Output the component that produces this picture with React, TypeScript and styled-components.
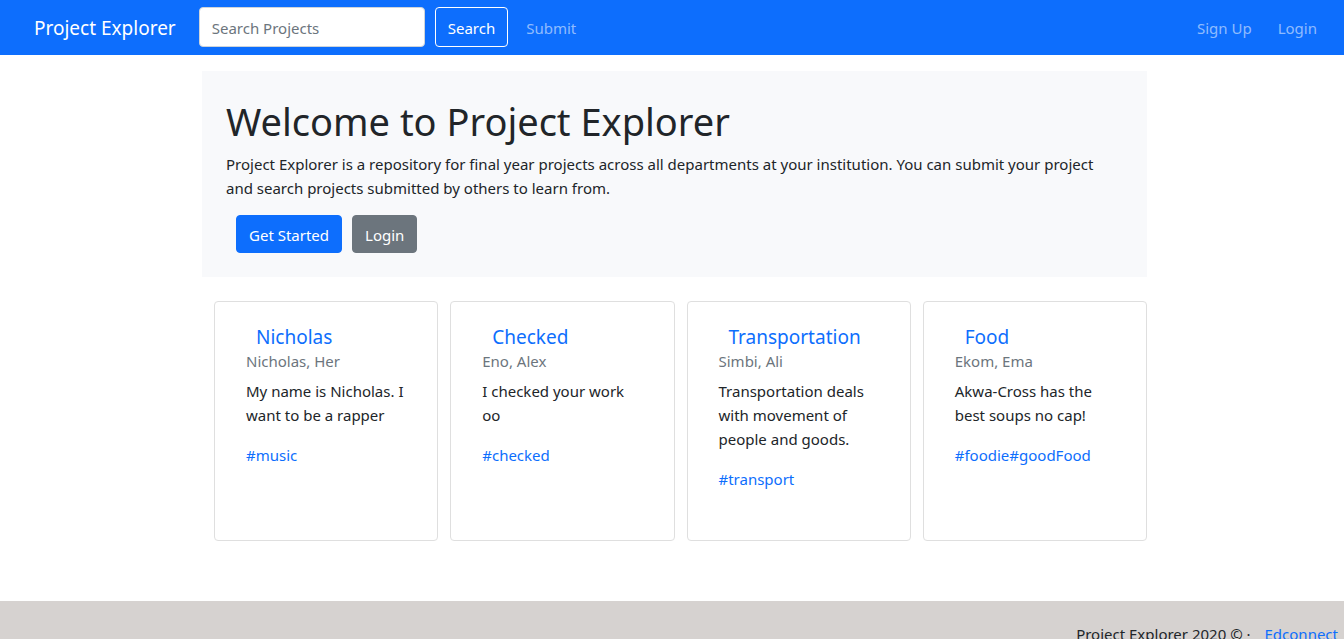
import React from "react";
import styled, { createGlobalStyle, css } from "styled-components";

const blue = "#0d6efd";
const grey = "#6c757d";

const GlobalStyle = createGlobalStyle`
  *, *::before, *::after { box-sizing: border-box; }
  body {
    margin: 0;
    background: #fff;
    color: #212529;
    font: 400 15px/24px "Segoe UI", "Noto Sans", "Open Sans", sans-serif;
  }
  h1, h2, p { margin: 0; font-weight: 400; }
  a { color: ${blue}; text-decoration: none; }
`;

const Navbar = styled.nav`
  display: flex;
  align-items: center;
  min-height: 55px;
  padding: 0 27px 1px 34px;
  background: ${blue};
`;

const Brand = styled.a`
  margin-right: 23px;
  padding-top: 2px;
  font-size: 19px;
  line-height: 30px;
  color: #fff;
  white-space: nowrap;
`;

const SearchForm = styled.form`
  display: flex;
  gap: 10px;
  margin-right: 18px;
`;

const SearchInput = styled.input`
  width: 226px;
  height: 40px;
  padding: 8px 12px 6px;
  border: 1px solid #ced4da;
  border-radius: 4px;
  background: #fff;
  color: #212529;
  font: inherit;
  &::placeholder { color: ${grey}; opacity: 1; }
`;

const buttonBase = css`
  padding: 7px 12px 5px;
  border: 1px solid;
  border-radius: 4px;
  color: #fff;
  font: inherit;
  white-space: nowrap;
`;

const SearchButton = styled.button`
  ${buttonBase}
  border-color: #fff;
  background: transparent;
`;

const NavLink = styled.a`
  padding-top: 2px;
  color: rgba(255, 255, 255, 0.55);
  white-space: nowrap;
`;

const AccountLinks = styled.div`
  display: flex;
  gap: 26px;
  margin-left: auto;
`;

const Container = styled.main`
  max-width: 950px;
  margin: 0 auto;
  padding: 16px 0 60px 5px;
`;

const Hero = styled.section`
  padding: 24px;
  background: #f8f9fb;
`;

const HeroTitle = styled.h1`
  margin: 2px 0 7px;
  font-size: 38px;
  line-height: 48px;
`;

const HeroText = styled.p`
  max-width: 880px;
`;

const HeroActions = styled.div`
  display: flex;
  gap: 10px;
  margin-top: 15px;
  padding-left: 10px;
`;

const ActionLink = styled.a<{ $tone: string }>`
  ${buttonBase}
  color: #fff;
  border-color: ${(p) => p.$tone};
  background: ${(p) => p.$tone};
`;

const CardGrid = styled.section`
  display: grid;
  grid-template-columns: repeat(4, 1fr);
  gap: 12px;
  margin-top: 24px;
  padding-left: 12px;
`;

const Card = styled.article`
  min-height: 240px;
  padding: 23px 31px;
  border: 1px solid #dfdfdf;
  border-radius: 4px;
`;

const CardTitle = styled.h2`
  padding-left: 10px;
  font-size: 19px;
  line-height: 24px;
`;

const Authors = styled.p`
  margin-bottom: 6px;
  color: ${grey};
`;

const Summary = styled.p`
  margin-bottom: 16px;
`;

const Footer = styled.footer`
  display: flex;
  justify-content: flex-end;
  gap: 14px;
  padding: 21px 6px;
  background: #d6d2d0;
`;

const projects = [
  { title: "Nicholas", authors: "Nicholas, Her", summary: "My name is Nicholas. I want to be a rapper", tags: ["#music"] },
  { title: "Checked", authors: "Eno, Alex", summary: "I checked your work oo", tags: ["#checked"] },
  { title: "Transportation", authors: "Simbi, Ali", summary: "Transportation deals with movement of people and goods.", tags: ["#transport"] },
  { title: "Food", authors: "Ekom, Ema", summary: "Akwa-Cross has the best soups no cap!", tags: ["#foodie", "#goodFood"] },
];

export default function App() {
  return (
    <>
      <GlobalStyle />
      <Navbar>
        <Brand href="#">Project Explorer</Brand>
        <SearchForm role="search" onSubmit={(e) => e.preventDefault()}>
          <SearchInput type="search" placeholder="Search Projects" aria-label="Search Projects" />
          <SearchButton type="submit">Search</SearchButton>
        </SearchForm>
        <NavLink href="#submit">Submit</NavLink>
        <AccountLinks>
          <NavLink href="#signup">Sign Up</NavLink>
          <NavLink href="#login">Login</NavLink>
        </AccountLinks>
      </Navbar>
      <Container>
        <Hero>
          <HeroTitle>Welcome to Project Explorer</HeroTitle>
          <HeroText>
            Project Explorer is a repository for final year projects across all departments at your
            institution. You can submit your project and search projects submitted by others to learn from.
          </HeroText>
          <HeroActions>
            <ActionLink href="#signup" $tone={blue}>Get Started</ActionLink>
            <ActionLink href="#login" $tone={grey}>Login</ActionLink>
          </HeroActions>
        </Hero>
        <CardGrid>
          {projects.map((project) => (
            <Card key={project.title}>
              <CardTitle><a href="#project">{project.title}</a></CardTitle>
              <Authors>{project.authors}</Authors>
              <Summary>{project.summary}</Summary>
              {project.tags.map((tag) => (
                <a key={tag} href="#tag">{tag}</a>
              ))}
            </Card>
          ))}
        </CardGrid>
      </Container>
      <Footer>
        <span>Project Explorer 2020 © ·</span>
        <a href="#edconnect">Edconnect</a>
      </Footer>
    </>
  );
}
